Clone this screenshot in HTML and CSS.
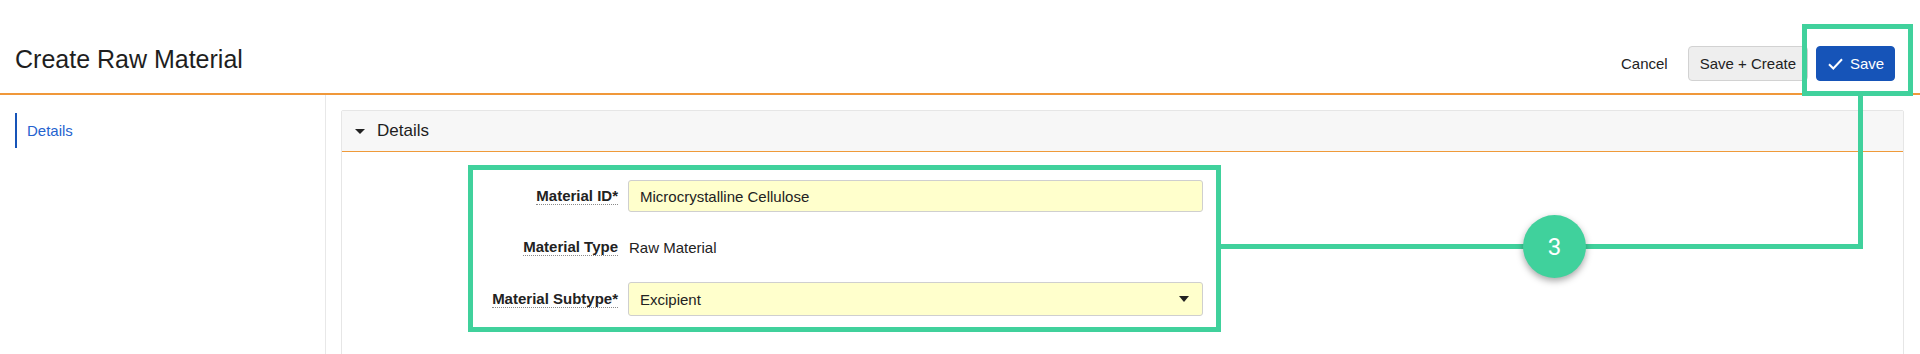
FILE: index.html
```html
<!DOCTYPE html>
<html lang="en">
<head>
<meta charset="utf-8">
<title>Create Raw Material</title>
<link rel="stylesheet" href="styles.css">
</head>
<body>
<div class="page">
  <header class="topbar">
    <h1 class="title">Create Raw Material</h1>
    <div class="actions">
      <button class="btn btn-link">Cancel</button>
      <button class="btn btn-default">Save + Create</button>
      <button class="btn btn-primary"><svg class="check" width="15" height="12" viewBox="0 0 15 12"><path d="M1 6.2 L5.3 10.5 L14 1.2" fill="none" stroke="#fff" stroke-width="2"/></svg>Save</button>
    </div>
  </header>
  <div class="main">
    <aside class="sidebar">
      <a class="nav-item">Details</a>
    </aside>
    <div class="content">
      <section class="panel">
        <div class="panel-head"><span class="caret"></span>Details</div>
        <div class="panel-body">
          <div class="form">
            <div class="lbl"><span>Material ID*</span></div>
            <div class="field input">Microcrystalline Cellulose</div>
            <div class="lbl"><span>Material Type</span></div>
            <div class="field static">Raw Material</div>
            <div class="lbl"><span>Material Subtype*</span></div>
            <div class="field input select">Excipient<span class="sel-caret"></span></div>
          </div>
        </div>
      </section>
    </div>
  </div>

  <div class="annot">
    <div class="hl hl-save"></div>
    <div class="hl hl-form"></div>
    <div class="line line-h"></div>
    <div class="line line-v"></div>
    <div class="step">3</div>
  </div>
</div>
</body>
</html>
```

FILE: styles.css
```css
* { box-sizing: border-box; }
html, body { margin: 0; padding: 0; }
body {
  font-family: "Liberation Sans", Arial, sans-serif;
  font-size: 15px;
  color: #222;
  background: #fff;
}
.page {
  position: relative;
  width: 1920px;
  height: 354px;
  overflow: hidden;
}

/* header */
.topbar {
  height: 95px;
  border-bottom: 2px solid #f0983a;
  display: flex;
  align-items: flex-end;
  justify-content: space-between;
  padding: 0 25px 12px 15px;
}
.title {
  margin: 0 0 9px 0;
  font-size: 25px;
  line-height: 25px;
  font-weight: normal;
  color: #1e1e1e;
}
.actions {
  display: flex;
  gap: 8px;
}
.btn {
  height: 35px;
  font-family: inherit;
  font-size: 15px;
  line-height: 1;
  padding: 0 11px;
  border-radius: 4px;
  border: 1px solid transparent;
  background: none;
  color: #222;
  display: flex;
  align-items: center;
}
.btn-default {
  background: #eeeeee;
  border-color: #d2d2d2;
}
.btn-primary {
  background: #1654b8;
  border-color: #1654b8;
  color: #fff;
  padding: 0 11px 0 11px;
  width: 79px;
}
.check { margin-right: 7px; flex: none; }

/* main area */
.main {
  display: flex;
  height: 259px;
}
.sidebar {
  width: 326px;
  flex: none;
  border-right: 1px solid #e8e8e8;
  padding-top: 18px;
}
.nav-item {
  display: block;
  margin-left: 15px;
  height: 35px;
  line-height: 35px;
  border-left: 2px solid #1654b8;
  padding-left: 10px;
  color: #2563cf;
  font-size: 15px;
}
.content {
  flex: 1;
  padding: 15px 16px 0 15px;
}
.panel {
  border: 1px solid #e6e6e6;
  border-radius: 2px;
  height: 300px;
}
.panel-head {
  height: 41px;
  background: #f7f7f7;
  border-bottom: 1px solid #ef9a3a;
  display: flex;
  align-items: center;
  padding-left: 13px;
  font-size: 17px;
  color: #1e1e1e;
}
.caret {
  width: 0;
  height: 0;
  border-left: 5px solid transparent;
  border-right: 5px solid transparent;
  border-top: 5px solid #222;
  margin-right: 12px;
}
.panel-body {
  padding: 28px 0 0 76px;
}
.form {
  display: grid;
  grid-template-columns: 200px 575px;
  grid-template-rows: 32px 32px 34px;
  column-gap: 10px;
  row-gap: 19px;
}
.lbl {
  display: flex;
  align-items: center;
  justify-content: flex-end;
  font-weight: bold;
  color: #222;
}
.lbl span {
  line-height: 17px;
  border-bottom: 1px dotted #8a8a8a;
}
.field {
  display: flex;
  align-items: center;
}
.input {
  background: #ffffcc;
  border: 1px solid #cfcfcf;
  border-radius: 3px;
  padding-left: 11px;
}
.static { padding-left: 1px; }
.select {
  position: relative;
  justify-content: space-between;
  padding-right: 13px;
}
.sel-caret {
  width: 0;
  height: 0;
  border-left: 5.5px solid transparent;
  border-right: 5.5px solid transparent;
  border-top: 6px solid #222;
}

/* annotations */
.annot {
  position: absolute;
  inset: 0;
  pointer-events: none;
}
.hl {
  position: absolute;
  border: 5px solid #40d19c;
}
.hl-save { left: 1802px; top: 24px; width: 111px; height: 72px; }
.hl-form { left: 468px; top: 165px; width: 753px; height: 167px; }
.line { position: absolute; background: #40d19c; }
.line-h { left: 1221px; top: 244px; width: 642px; height: 5px; }
.line-v { left: 1858px; top: 96px; width: 5px; height: 153px; }
.step {
  position: absolute;
  left: 1523px;
  top: 215px;
  width: 63px;
  height: 63px;
  border-radius: 50%;
  background: #40d19c;
  box-shadow: 0 3px 7px rgba(0,0,0,0.35);
  color: #fff;
  font-family: Roboto, "Liberation Sans", sans-serif;
  font-size: 24px;
  display: flex;
  align-items: center;
  justify-content: center;
}
```
